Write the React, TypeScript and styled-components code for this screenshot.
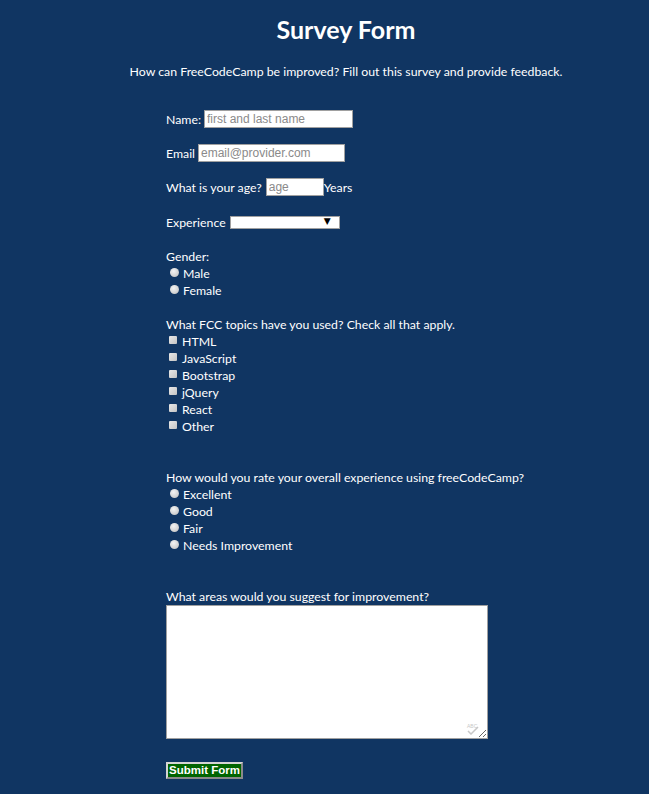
import React from "react";
import styled, { createGlobalStyle } from "styled-components";

const Global = createGlobalStyle`
  html, body { margin: 0; padding: 0; background: #103562; }
  body { font-family: Lato, "Open Sans", sans-serif; color: #ffffff; }
`;

const Page = styled.div`
  min-height: 794px;
  background: #103562;
  padding-left: 43px;
  box-sizing: border-box;
`;

const Header = styled.header`
  text-align: center;
  padding-top: 12px;
`;

const Title = styled.h1`
  margin: 0;
  font-size: 25px;
  line-height: 34px;
  font-weight: 700;
`;

const Subtitle = styled.p`
  margin: 17px 0 0;
  font-size: 12.3px;
  line-height: 17px;
`;

const Form = styled.form`
  display: flex;
  flex-direction: column;
  margin-left: 123px;
  padding-top: 30px;
  font-size: 12.3px;
  line-height: 17px;
`;

const Row = styled.div<{ $gap?: number }>`
  display: flex;
  align-items: center;
  height: 18px;
  margin-bottom: ${(p) => p.$gap ?? 16}px;
  white-space: nowrap;
`;

const TextInput = styled.input<{ $w: number; $ml?: number }>`
  width: ${(p) => p.$w}px;
  height: 18px;
  box-sizing: border-box;
  margin: 0 0 0 ${(p) => p.$ml ?? 3}px;
  padding: 1px 2px;
  border: 1px solid #a0a0a0;
  background: #fff;
  font-family: "Liberation Sans", Arial, sans-serif;
  font-size: 12px;
  outline: none;
  &::placeholder { color: #8a8a8a; }
`;

const SelectBox = styled.div`
  position: relative;
  width: 110px;
  height: 13px;
  box-sizing: border-box;
  margin-left: 4px;
  border: 1px solid #a0a0a0;
  background: #fff;
`;

const Arrow = styled.span`
  position: absolute;
  right: 8px;
  top: -2px;
  font-family: "DejaVu Sans", sans-serif;
  font-size: 9px;
  line-height: 13px;
  color: #000;
`;

const Line = styled.div<{ $mb?: number; $indent?: number }>`
  display: flex;
  align-items: center;
  height: 17px;
  margin-bottom: ${(p) => p.$mb ?? 0}px;
  padding-left: ${(p) => p.$indent ?? 0}px;
  white-space: nowrap;
`;

const Radio = styled.input.attrs({ type: "radio" })`
  appearance: none;
  width: 9px;
  height: 9px;
  margin: 0 4px 0 0;
  border-radius: 50%;
  background: radial-gradient(circle at 40% 35%, #f4f4f4 0%, #d6d6d6 55%, #b8b8b8 100%);
  border: none;
  position: relative;
  top: -1px;
`;

const Check = styled.input.attrs({ type: "checkbox" })`
  appearance: none;
  width: 8px;
  height: 8px;
  margin: 0 5px 0 0;
  border-radius: 1px;
  background: linear-gradient(135deg, #e8e8e8 0%, #c4c4c4 100%);
  border: none;
  position: relative;
  top: -2px;
`;

const AreaWrap = styled.div`
  position: relative;
  width: 322px;
  height: 134px;
  margin-bottom: 22px;
`;

const TextArea = styled.textarea`
  width: 322px;
  height: 134px;
  box-sizing: border-box;
  margin: 0;
  border: 1px solid #a0a0a0;
  background: #fff;
  display: block;
  outline: none;
`;

const SpellIcon = styled.svg`
  position: absolute;
  right: 8px;
  bottom: 4px;
  pointer-events: none;
`;

const Submit = styled.button`
  width: 77px;
  height: 17px;
  box-sizing: border-box;
  padding: 0;
  background: #006400;
  color: #fff;
  border: 2px solid;
  border-color: #d4d4d4 #8a8a8a #8a8a8a #d4d4d4;
  font-family: "Liberation Sans", Arial, sans-serif;
  font-weight: 700;
  font-size: 11.5px;
  line-height: 13px;
  white-space: nowrap;
`;

export default function App() {
  return (
    <Page>
      <Global />
      <Header>
        <Title>Survey Form</Title>
        <Subtitle>How can FreeCodeCamp be improved? Fill out this survey and provide feedback.</Subtitle>
      </Header>
      <Form onSubmit={(e) => e.preventDefault()}>
        <Row>
          Name: <TextInput $w={149} placeholder="first and last name" />
        </Row>
        <Row>
          Email <TextInput $w={147} placeholder="email@provider.com" />
        </Row>
        <Row $gap={17}>
          What is your age? <TextInput $w={58} $ml={4} placeholder="age" />Years
        </Row>
        <Row $gap={17}>
          Experience
          <SelectBox>
            <Arrow>▼</Arrow>
          </SelectBox>
        </Row>
        <Line>Gender:</Line>
        <Line $indent={4}><Radio name="g" />Male</Line>
        <Line $indent={4} $mb={17}><Radio name="g" />Female</Line>
        <Line>What FCC topics have you used? Check all that apply.</Line>
        {["HTML", "JavaScript", "Bootstrap", "jQuery", "React", "Other"].map((t, i) => (
          <Line key={t} $indent={3} $mb={i === 5 ? 34 : 0}>
            <Check />
            {t}
          </Line>
        ))}
        <Line>How would you rate your overall experience using freeCodeCamp?</Line>
        {["Excellent", "Good", "Fair", "Needs Improvement"].map((t, i) => (
          <Line key={t} $indent={4} $mb={i === 3 ? 34 : 0}>
            <Radio name="r" />
            {t}
          </Line>
        ))}
        <Line>What areas would you suggest for improvement?</Line>
        <AreaWrap>
          <TextArea />
          <SpellIcon width="14" height="12" viewBox="0 0 14 12">
            <text x="1" y="5" fontSize="5" fill="#c8c8c8" fontFamily="Liberation Sans, sans-serif">ABC</text>
            <path d="M2 8 L5 11 L12 4" stroke="#c8c8c8" strokeWidth="1.5" fill="none" />
          </SpellIcon>
        </AreaWrap>
        <div>
          <Submit type="submit">Submit Form</Submit>
        </div>
      </Form>
    </Page>
  );
}
